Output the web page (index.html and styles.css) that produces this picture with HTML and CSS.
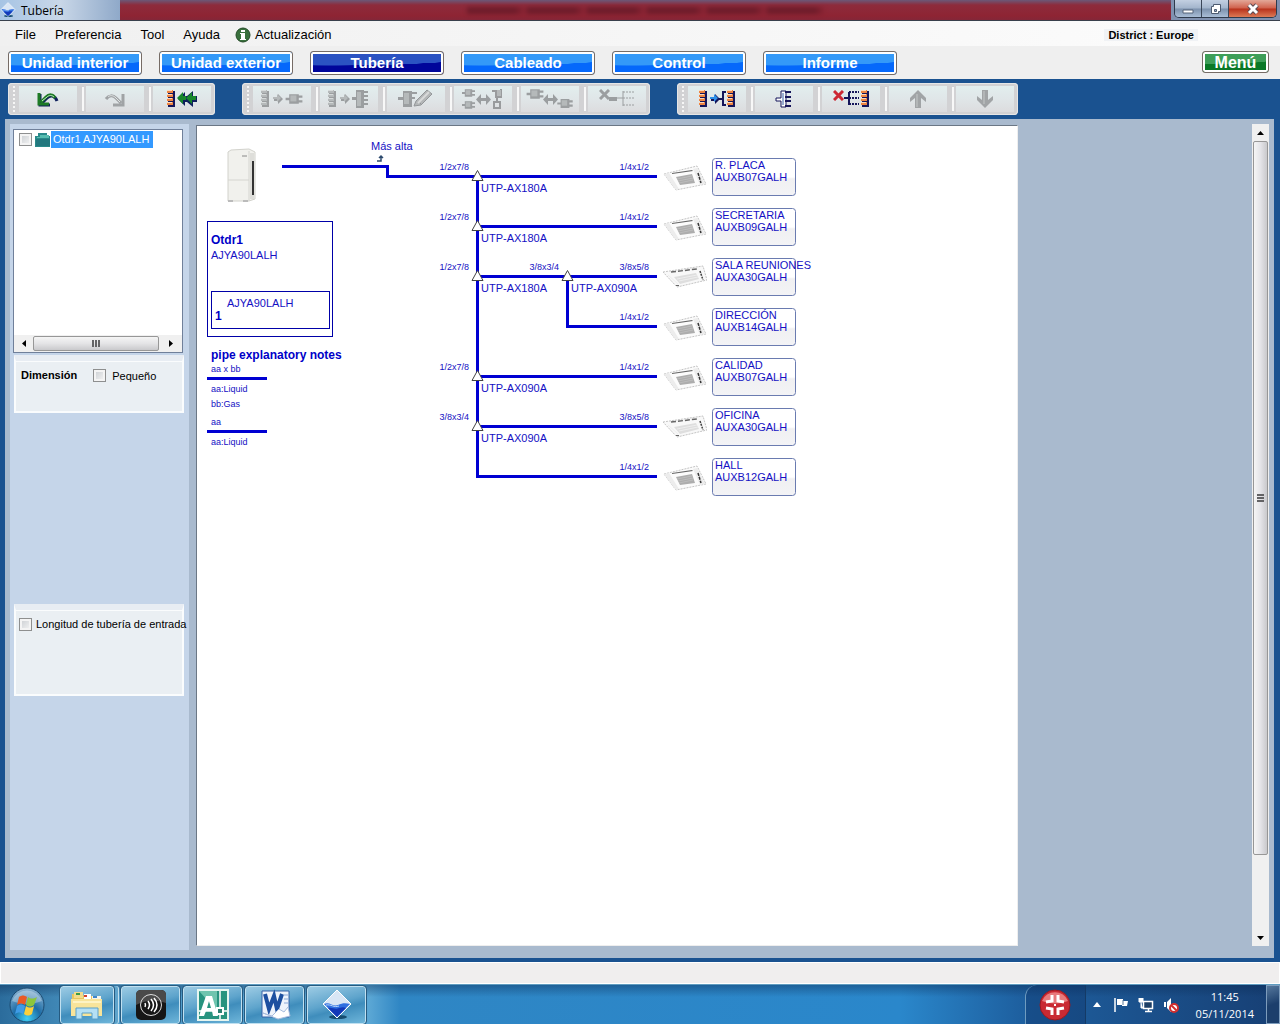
FILE: index.html
```html
<!DOCTYPE html>
<html lang="es">
<head>
  <meta charset="UTF-8">
  <meta name="viewport" content="width=device-width, initial-scale=1">
  <title>Tubería</title>
  <link rel="stylesheet" href="styles.css">
</head>
<body>
  <!-- shared icon shapes -->
  <svg class="sprite" aria-hidden="true">
    <symbol id="stack" viewBox="0 0 8 17">
      <path class="edge" d="M1 1h7v4H1zM1 5h7v4H1zM1 9h7v4H1zM1 13h7v4H1z"/>
      <path class="accent" d="M0 0h6v3H0zM0 4h6v3H0zM0 8h6v3H0zM0 12h6v3H0z"/>
      <path class="shine" d="M0 0h5v1H0zM0 4h5v1H0zM0 8h5v1H0zM0 12h5v1H0z"/>
    </symbol>
    <symbol id="arrow-r" viewBox="0 0 10 11">
      <path class="edge" d="M1 4h4V1l5 5-5 5V8H1z"/>
      <path class="arrow" d="M0 4h4V1l4 4-4 4V6H0z"/>
    </symbol>
    <symbol id="arrow-lr" viewBox="0 0 15 11">
      <path class="edge" d="M0 5.500 5 0v4h5V0l5 5.500-5 5.500V7H5v4z"/>
    </symbol>
    <symbol id="block" viewBox="0 0 14 10">
      <path class="edge" d="M0 4h3v2H0zM3 1h8v8H3zM11 2h3v2h-3zM11 6h3v2h-3z"/>
      <path class="accent" d="M4 2h5v5H4z"/>
    </symbol>
    <symbol id="cross" viewBox="0 0 11 11">
      <path class="cross" d="M1 1l9 9M10 1l-9 9"/>
    </symbol>
    <symbol id="cassette-b" viewBox="0 0 44 26">
      <path d="M1 9 34 1 43 19 13 25z" fill="#fbfbfb" stroke="#c4c4c4" stroke-dasharray="2 1"/>
      <path d="M1 9 6 8 16 24 13 25zM34 3l8 16-5 1-7-16z" fill="#ececec"/>
      <path d="m9 8 20-3 1 1-21 3z" fill="#666"/>
      <path d="m13 12 16-3 3 9-15 2z" fill="#adadad"/>
      <path d="m14 14 15-3M15 16l15-3M16 18l14-3" stroke="#bcbcbc"/>
      <path d="m35 8 3 10" stroke="#333" stroke-width="1.500" stroke-dasharray="3 1"/>
    </symbol>
    <symbol id="cassette-a" viewBox="0 0 44 26">
      <path d="M0 7 40 1 44 15 14 22z" fill="#f8f8f8" stroke="#c4c4c4" stroke-dasharray="2 1"/>
      <path d="m11 12 22-4 3 6-19 5z" fill="#dedede"/>
      <path d="m8 7 26-3" stroke="#666" stroke-width="1.500" stroke-dasharray="5 2"/>
      <path d="m14 14 20-4M16 16l19-4M5 10l10 9" stroke="#eee"/>
      <path d="m37 6 3 9" stroke="#444" stroke-width="1.500" stroke-dasharray="2 1"/>
      <path d="M13 20h3v1h-3z" fill="#666"/>
    </symbol>
    <symbol id="app-logo" viewBox="0 0 32 32">
      <ellipse cx="17" cy="28" rx="9" ry="2" fill="#154c70"/>
      <path d="M16 1 30 15 16 29 2 15z" fill="#d9e6f5" stroke="#fff"/>
      <path d="M3 15c5-3 9 3 14 1 4-2 8-2 12-1L16 28z" fill="#2f6fe0"/>
      <path d="M7 19c5-1 7 2 11 0 3-1 5-1 7 0l-9 9z" fill="#1238b8"/>
      <path d="M5 16c5-1 8 3 13 1" fill="none" stroke="#b8d4fa"/>
    </symbol>
  </svg>

  <div class="window">
    <header class="titlebar">
      <svg class="title-icon"><use href="#app-logo"/></svg>
      <h1>Tubería</h1>
      <div class="glass"><span class="ghost"></span></div>
      <div class="caption-buttons">
        <button aria-label="Minimizar"><svg width="12" height="12"><path d="M1 7h10v3H1z" fill="#fff" stroke="#56657a"/></svg></button>
        <button aria-label="Restaurar"><svg width="13" height="12"><path d="M4.500 1.500h7v7h-2v2h-7v-7h2z" fill="#fff" stroke="#4d5b70"/><path d="M5.500 6.500h2v2h-2z" fill="#9db0c8" stroke="#4d5b70"/></svg></button>
        <button class="close" aria-label="Cerrar"><svg width="14" height="12"><path d="m3 2 8 8m0-8-8 8" stroke="#5a4a52" stroke-width="5"/><path d="m3 2 8 8m0-8-8 8" stroke="#fff" stroke-width="3"/></svg></button>
      </div>
    </header>

    <nav class="menubar">
      <button>File</button>
      <button>Preferencia</button>
      <button>Tool</button>
      <button>Ayuda</button>
      <button class="update">
        <svg width="16" height="16"><circle cx="8" cy="8" r="7" fill="#38703c" stroke="#234a26"/><path d="M6 3h4v2H6zM5 6h5v6h1v1H5v-1h1V7H5z" fill="#fff"/></svg>
        Actualización
      </button>
      <span class="district">District : Europe</span>
    </nav>

    <nav class="tabs">
      <button class="tab">Unidad interior</button>
      <button class="tab">Unidad exterior</button>
      <button class="tab active">Tubería</button>
      <button class="tab">Cableado</button>
      <button class="tab">Control</button>
      <button class="tab">Informe</button>
      <button class="tab menu">Menú</button>
    </nav>

    <div class="toolbar">
      <div class="tools">
        <button aria-label="Deshacer"><svg width="22" height="18"><path d="M3 4v11h10M5 13l5-5c3-3 8-3 10 3" fill="none" stroke="#10205c" stroke-width="3"/><path d="M2 3v11h10M4 12l5-5c3-3 7-3 9 1" fill="none" stroke="#1d7a25" stroke-width="3"/><path d="M5 11l5-4c2-2 5-2 7 0" fill="none" stroke="#c4ecc4"/></svg></button>
        <button class="off" aria-label="Rehacer"><svg width="22" height="18"><path d="M19 4v11H9M17 13l-5-5c-3-3-7-3-10 1" fill="none" stroke="#a0a3a5" stroke-width="3"/><path d="m16 12-4-4C9 5 6 5 4 7" fill="none" stroke="#e0e4e4"/></svg></button>
        <button aria-label="Retirar todo"><svg width="30" height="18"><use href="#stack" width="8" height="17"/><path d="m11 9 7-7v4h2l6-5v5h4v6h-4v5l-6-5h-2v4z" fill="#10205c"/><path d="m10 8 6-6v4h3v4h-3v4zM19 8l6-6v4h4v4h-4v4z" fill="#17872b"/></svg></button>
      </div>

      <div class="tools">
        <button class="off" aria-label="Conectar unidad"><svg width="42" height="20"><use href="#stack" width="8" height="17" y="1"/><use href="#arrow-r" x="12" y="4" width="10" height="11"/><use href="#block" x="24" y="4" width="18" height="12"/></svg></button>
        <button class="off" aria-label="Conectar grupo"><svg width="42" height="20"><use href="#stack" width="8" height="17" y="1"/><use href="#arrow-r" x="12" y="4" width="10" height="11"/><path class="edge" d="M24 8h4V1h8v18h-8v-8h-4z"/><path class="accent" d="M29 3h4v14h-4z"/><path class="edge" d="M36 2h4v2h-4zM36 6h4v2h-4zM36 10h4v2h-4zM36 14h4v2h-4z"/></svg></button>
        <button class="off" aria-label="Editar"><svg width="36" height="20"><path class="edge" d="M0 8h5V2h9v16H5v-7H0z"/><path class="accent" d="M6 4h5v11H6z"/><path d="m16 17 2-5L29 1l5 4-11 11zM20 12l3 3" fill="#b4b7b8" stroke="#939698"/><path d="m20 14 11-11" stroke="#d8dada" stroke-width="2"/><path class="edge" d="M14 3h5v2h-5zM14 8h3v2h-3z"/></svg></button>
        <button class="off" aria-label="Intercambiar ramas"><svg width="42" height="22"><use href="#block" width="13" height="10"/><use href="#block" y="12" width="13" height="10"/><use href="#arrow-lr" x="14" y="6" width="15" height="11"/><path d="M30 3h4v6h5V1m-4 8v5M32 14h6v6h-6z" fill="none" stroke="#999b9d" stroke-width="2"/><path class="accent" d="M35 2h4v6h-4z"/></svg></button>
        <button class="off" aria-label="Cambiar unidad"><svg width="48" height="22"><use href="#block" width="18" height="12"/><use href="#arrow-lr" x="17" y="6" width="15" height="11"/><use href="#block" x="30" y="10" width="18" height="11"/></svg></button>
        <button class="off" aria-label="Eliminar rama"><svg width="36" height="20"><use href="#cross" width="11" height="11"/><path class="edge" d="M10 8h8v4h-8z"/><path class="wire" d="M18 9h6m0-7v15"/><path class="dash" d="M24 3h11M24 9h11M24 16h11"/></svg></button>
      </div>

      <div class="tools">
        <button aria-label="Conectar automáticamente"><svg width="36" height="18"><use href="#stack" width="8" height="17"/><use href="#arrow-r" x="11" y="3" width="10" height="11"/><path class="wire" d="M20 9h4m3-7h-3v13h3"/><use href="#stack" x="28" width="8" height="17"/></svg></button>
        <button aria-label="Colector"><svg width="18" height="18"><path d="M1 8h5V1h5v16H6v-6H1z" fill="#fff" stroke="#15155a"/><path class="wire" d="M10 2h6M10 7h6M10 11h6M10 16h6"/><path d="M7 3h2v12H7z" fill="#9aaed2"/></svg></button>
        <button aria-label="Eliminar conexiones"><svg width="36" height="18"><use href="#cross" width="11" height="11"/><path class="wire" d="M11 8h5m0-6v13"/><path class="dash" d="M16 2h10M16 8h10M16 14h10"/><use href="#stack" x="28" width="8" height="17"/></svg></button>
        <button class="off" aria-label="Subir"><svg width="18" height="18"><path d="m9 0 8 8v4l-5-4v10H6V8l-5 4V8z" fill="#a1a4a6"/><path d="M8 4v13" stroke="#c4c8c8"/></svg></button>
        <button class="off" aria-label="Bajar"><svg width="18" height="18"><path d="m9 18 8-8V6l-5 4V0H6v10L1 6v4z" fill="#a1a4a6"/><path d="M8 1v13" stroke="#c4c8c8"/></svg></button>
      </div>
    </div>

    <main class="workspace">
      <aside class="sidebar">
        <div class="tree">
          <div class="tree-item">
            <input type="checkbox" id="otdr1">
            <svg width="16" height="14"><path d="M0 3h3V0h9v3h3v11H0z" fill="#2a8a8a"/><path d="M2 4h3V2h9v3H2z" fill="#57bdb0"/><path d="M1 6h14v7H1z" fill="#23787e"/></svg>
            <label for="otdr1">Otdr1 AJYA90LALH</label>
          </div>
          <div class="scroll-h">
            <button aria-label="Izquierda"><svg width="4" height="7"><path d="M4 0v7L0 3.500z"/></svg></button>
            <div class="thumb"><i></i><i></i><i></i></div>
            <button aria-label="Derecha"><svg width="4" height="7"><path d="M0 0v7l4-3.500z"/></svg></button>
          </div>
        </div>
        <section class="panel">
          <strong>Dimensión</strong>
          <label><input type="checkbox"> Pequeño</label>
        </section>
        <section class="panel length">
          <label><input type="checkbox"> Longitud de tubería de entrada</label>
        </section>
      </aside>

      <div class="paper">
        <svg class="diagram" width="640" height="400" viewBox="0 0 640 400">
          <defs>
            <linearGradient id="card-fill" x1="0" y1="0" x2="0" y2="1">
              <stop offset="0.500" stop-color="#fff"/>
              <stop offset="0.550" stop-color="#f0f0f2"/>
              <stop offset="1" stop-color="#f3f3f6"/>
            </linearGradient>
          </defs>

          <!-- outdoor unit -->
          <path d="m31 26 3-2 18-1 6 3v47l-6 2H31z" fill="#f1f1ed" stroke="#d2d2cc"/>
          <path d="M52 25v50M31 54h21" stroke="#d5d5d0"/>
          <path d="M53 27h4v46h-4z" fill="#dededa"/>
          <path d="M56 35v34" stroke="#333" stroke-width="2"/>
          <path d="M45 30h5" stroke="#888"/>
          <path d="M31 75h5m10 0h5" stroke="#bbb" stroke-width="2"/>

          <!-- outdoor unit data and legend -->
          <g class="frame">
            <rect x="10.500" y="95.500" width="125" height="115"/>
            <rect x="14.500" y="165.500" width="118" height="37"/>
          </g>
          <text class="bold" x="14" y="118">Otdr1</text>
          <text x="14" y="133">AJYA90LALH</text>
          <text x="30" y="181">AJYA90LALH</text>
          <text class="bold" x="18" y="194">1</text>
          <text class="bold" x="14" y="233">pipe explanatory notes</text>
          <g class="small">
            <text x="14" y="246">aa x bb</text>
            <text x="14" y="266">aa:Liquid</text>
            <text x="14" y="281">bb:Gas</text>
            <text x="14" y="299">aa</text>
            <text x="14" y="319">aa:Liquid</text>
          </g>
          <path class="pipe" d="M10 252.500h60M10 305.500h60"/>

          <text x="174" y="24">Más alta</text>
          <path d="M180 35h4v-4m-2 1 2-2 2 2" fill="none" stroke="#2d4a6e" stroke-width="1.500"/>

          <!-- pipes -->
          <path class="pipe" d="M85 40.500h105.500v10H460M280.500 50.500v300H460M280.500 100.500H460M280.500 150.500H460M370.500 150.500v50H460M280.500 250.500H460M280.500 300.500H460"/>

          <g class="joints">
            <path d="m280.500 44.500 5.500 10h-11z"/>
            <path d="m280.500 94.500 5.500 10h-11z"/>
            <path d="m280.500 144.500 5.500 10h-11z"/>
            <path d="m370.500 144.500 5.500 10h-11z"/>
            <path d="m280.500 244.500 5.500 10h-11z"/>
            <path d="m280.500 294.500 5.500 10h-11z"/>
          </g>
          <text x="284" y="66">UTP-AX180A</text>
          <text x="284" y="116">UTP-AX180A</text>
          <text x="284" y="166">UTP-AX180A</text>
          <text x="374" y="166">UTP-AX090A</text>
          <text x="284" y="266">UTP-AX090A</text>
          <text x="284" y="316">UTP-AX090A</text>

          <g class="small size">
            <text x="272" y="44">1/2x7/8</text>
            <text x="272" y="94">1/2x7/8</text>
            <text x="272" y="144">1/2x7/8</text>
            <text x="362" y="144">3/8x3/4</text>
            <text x="272" y="244">1/2x7/8</text>
            <text x="272" y="294">3/8x3/4</text>
            <text x="452" y="44">1/4x1/2</text>
            <text x="452" y="94">1/4x1/2</text>
            <text x="452" y="144">3/8x5/8</text>
            <text x="452" y="194">1/4x1/2</text>
            <text x="452" y="244">1/4x1/2</text>
            <text x="452" y="294">3/8x5/8</text>
            <text x="452" y="344">1/4x1/2</text>
          </g>

          <!-- indoor units -->
          <g class="unit" transform="translate(466 32)">
            <use href="#cassette-b" y="7" width="44" height="26"/>
            <rect x="49.500" y="0.500" width="83" height="37" rx="3"/>
            <text x="52" y="11">R. PLACA</text><text x="52" y="23">AUXB07GALH</text>
          </g>
          <g class="unit" transform="translate(466 82)">
            <use href="#cassette-b" y="7" width="44" height="26"/>
            <rect x="49.500" y="0.500" width="83" height="37" rx="3"/>
            <text x="52" y="11">SECRETARIA</text><text x="52" y="23">AUXB09GALH</text>
          </g>
          <g class="unit" transform="translate(466 132)">
            <use href="#cassette-a" y="7" width="44" height="26"/>
            <rect x="49.500" y="0.500" width="83" height="37" rx="3"/>
            <text x="52" y="11">SALA REUNIONES</text><text x="52" y="23">AUXA30GALH</text>
          </g>
          <g class="unit" transform="translate(466 182)">
            <use href="#cassette-b" y="7" width="44" height="26"/>
            <rect x="49.500" y="0.500" width="83" height="37" rx="3"/>
            <text x="52" y="11">DIRECCIÓN</text><text x="52" y="23">AUXB14GALH</text>
          </g>
          <g class="unit" transform="translate(466 232)">
            <use href="#cassette-b" y="7" width="44" height="26"/>
            <rect x="49.500" y="0.500" width="83" height="37" rx="3"/>
            <text x="52" y="11">CALIDAD</text><text x="52" y="23">AUXB07GALH</text>
          </g>
          <g class="unit" transform="translate(466 282)">
            <use href="#cassette-a" y="7" width="44" height="26"/>
            <rect x="49.500" y="0.500" width="83" height="37" rx="3"/>
            <text x="52" y="11">OFICINA</text><text x="52" y="23">AUXA30GALH</text>
          </g>
          <g class="unit" transform="translate(466 332)">
            <use href="#cassette-b" y="7" width="44" height="26"/>
            <rect x="49.500" y="0.500" width="83" height="37" rx="3"/>
            <text x="52" y="11">HALL</text><text x="52" y="23">AUXB12GALH</text>
          </g>
        </svg>
      </div>

      <div class="scroll-v">
        <button aria-label="Arriba"><svg width="7" height="4"><path d="M0 4h7L3.500 0z"/></svg></button>
        <div class="thumb"><i></i><i></i><i></i></div>
        <button aria-label="Abajo"><svg width="7" height="4"><path d="M0 0h7L3.500 4z"/></svg></button>
      </div>
    </main>

    <div class="statusbar"></div>
  </div>

  <footer class="taskbar">
    <button class="start" aria-label="Inicio">
      <svg width="38" height="38" viewBox="0 0 38 38">
        <defs><radialGradient id="orb" cx="0.500" cy="0.900" r="0.900"><stop offset="0" stop-color="#3fd0f5"/><stop offset="0.450" stop-color="#1c6ca6"/><stop offset="1" stop-color="#8fb6d4"/></radialGradient></defs>
        <circle cx="19" cy="19" r="17" fill="url(#orb)" stroke="#1b4a70"/>
        <path d="M4 15a16 16 0 0 1 30 0c-10 4-20 4-30 0z" fill="#fff" opacity="0.300"/>
        <path d="M11 11c3-2 5-2 8 0l-2 8c-3-2-5-2-8 0z" fill="#ea5a24"/>
        <path d="M20 11c3 2 5 2 9 0l-3 8c-3 2-5 2-8 0z" fill="#8cc63c"/>
        <path d="M9 20c3-2 5-2 8 0l-2 8c-3-2-5-2-8 0z" fill="#3f9be6"/>
        <path d="M18 20c3 2 5 2 8 0l-2 8c-3 2-5 2-8 0z" fill="#fbd03c"/>
      </svg>
    </button>
    <button class="task stacked" aria-label="Explorador"><svg width="34" height="32"><path d="M2 5h10l2 2h17v20H2z" fill="#e8c65f"/><path d="M4 3h9v6H4z" fill="#f2dc8c"/><path d="M6 4h4v2H6z" fill="#3c9a46"/><path d="M14 5h7v5h-7z" fill="#fff"/><path d="M14 6h3v2h-3z" fill="#d5402c"/><path d="M22 7h9v5h-9z" fill="#f4f4ea"/><path d="M23 7h4v2h-4z" fill="#3f86cc"/><path d="M1 10h31v17H1z" fill="#f8e49a"/><path d="M3 12h28v2H3z" fill="#fdf3c4"/><path d="M6 30V19h22v11h-6v-6H12v6z" fill="#b5e0f4" stroke="#5ba0c8"/></svg></button>
    <button class="task" aria-label="Audio"><svg width="32" height="32"><rect x="1" y="1" width="30" height="30" rx="5" fill="#161616"/><path d="M1 6q0-5 5-5h20q5 0 5 5v8q-15-6-30 2z" fill="#4a4a4a"/><circle cx="16" cy="16" r="10.500" fill="none" stroke="#ddd"/><path d="M10 14q1 2 0 4M13 12q3 4 0 8M16 10q5 6 0 12M19 9q6 7 0 14" fill="none" stroke="#fff" stroke-width="1.500"/></svg></button>
    <button class="task" aria-label="CAD"><svg width="34" height="34"><path d="M2 2h30v30H2z" fill="#28937f" stroke="#e6f5f0" stroke-width="2"/><path d="M3 3h18v20z" fill="#6fc4ae"/><path d="m3 28 7-20h6l6 20h-5l-1-5h-6l-2 5zm8-8h4l-2-7z" fill="#fff"/><path d="M24 3v28M3 23h28" stroke="#fff" stroke-width="1.500"/><path d="M21 20h6v6h-6z" fill="#2b8072" stroke="#fff" stroke-width="2"/></svg></button>
    <button class="task" aria-label="Word"><svg width="32" height="32"><path d="M3 2h27v26H3z" fill="#eef3fb" stroke="#3562a8"/><path d="M25 6h4M25 10h4M25 14h4" stroke="#8aa8d8"/><path d="m6 5 4 15 5-13 3 13 5-15" fill="none" stroke="#1d4fa0" stroke-width="4"/><path d="m4 24 9 3 7-7 5 3 4-5 2 9-12 3z" fill="#fff" stroke="#a8bddd"/></svg></button>
    <button class="task" aria-label="Tubería"><svg width="32" height="32"><use href="#app-logo"/></svg></button>

    <div class="tray-app"><svg width="32" height="32"><circle cx="16" cy="16" r="15" fill="#c92a33" stroke="#9a1a22"/><path d="M3 12a14 14 0 0 1 26 0q-13 5-26 0z" fill="#e87a7c"/><path d="M13 6v6l-6 1M19 6v6l6 1M13 26v-6l-6-1M19 26v-6l6-1" fill="none" stroke="#fff" stroke-width="3"/><path d="M15 15h2v2h-2z" fill="#fff"/></svg></div>
    <div class="tray">
      <svg width="8" height="5"><path d="m4 0 4 5H0z" fill="#fff"/></svg>
      <svg width="16" height="16"><path d="M2 1v14" stroke="#fff" stroke-width="1.500"/><path d="M4 2h6v2h5l-1 5H9V8H4z" fill="#fff"/><path d="M10 3v5" stroke="#5a7a9c"/></svg>
      <svg width="16" height="16"><path d="M5.500 4.500h9v7h-9zM7 14.500h7M10.500 11v3" fill="#1c3f66" stroke="#fff" stroke-width="1.500"/><path d="M1 1v4h4V1M3 5v6h2" fill="#fff" stroke="#fff"/></svg>
      <svg width="16" height="16"><path d="M1 5h2v5H1zM4 5l4-4v14l-4-4z" fill="#fff"/><circle cx="11" cy="11" r="4" fill="#fff" stroke="#d22f2f" stroke-width="2"/><path d="m8 8 6 6" stroke="#d22f2f" stroke-width="2"/></svg>
      <time class="clock">11:45<br>05/11/2014</time>
    </div>
    <button class="show-desktop" aria-label="Mostrar escritorio"></button>
  </footer>
</body>
</html>
```

FILE: styles.css
```css
* { margin: 0; padding: 0; box-sizing: border-box; }
body {
  min-height: 100vh;
  display: flex;
  flex-direction: column;
  font-family: "Liberation Sans", Arial, sans-serif;
  font-size: 11px;
  color: #000;
  background: #1a5290;
}
button {
  font: inherit;
  color: inherit;
  border: none;
  background: none;
}
svg { display: block; flex: none; }
.sprite { position: absolute; width: 0; height: 0; }
.window {
  flex: 1;
  display: flex;
  flex-direction: column;
}

/* title bar */
.titlebar {
  display: flex;
  height: 21px;
  align-items: center;
  background: linear-gradient(90deg, #a6c4e4, #c9d7e8 60px, #8fa9c9 120px, #7f8fae);
  border-bottom: 1px solid #39404c;
}
.title-icon { width: 16px; height: 16px; }
h1 {
  width: 104px;
  padding-left: 5px;
  font: 12px "Open Sans", sans-serif;
}
.glass {
  flex: 1;
  height: 100%;
  display: flex;
  justify-content: center;
  align-items: center;
  background: linear-gradient(#6b5878, #8d2b3c 5px, #8e2433 16px, #842638);
}
.ghost {
  width: 34%;
  height: 7px;
  background: repeating-linear-gradient(90deg, #5a1522 0 48px, #84202f 56px 60px);
  opacity: 0.6;
  filter: blur(2px);
}
.caption-buttons {
  align-self: flex-start;
  display: flex;
  margin: 0 3px;
  border: 1px solid #2e3a4c;
  border-top: none;
  border-radius: 0 0 5px 5px;
  overflow: hidden;
}
.caption-buttons button {
  display: grid;
  place-items: center;
  width: 27px;
  height: 17px;
  border-right: 1px solid #3a4658;
  background: linear-gradient(#c3d0e2, #a3b5cc 8px, #7c91ad 9px, #a9bdd6);
}
.caption-buttons .close {
  width: 47px;
  border: none;
  background: linear-gradient(#e3a898, #d0614c 8px, #b8321c 9px, #dd7a55);
}

/* menu */
.menubar {
  display: flex;
  align-items: center;
  gap: 19px;
  height: 25px;
  padding: 2px 82px 0 15px;
  background: linear-gradient(90deg, #f0f0f0, #fcfcfc);
  font-size: 13px;
}
.update {
  display: flex;
  align-items: center;
  gap: 4px;
  margin-left: -4px;
}
.district {
  margin-left: auto;
  padding: 0 4px;
  background: #f0f2f5;
  font-size: 11px;
  font-weight: bold;
}

/* section tabs */
.tabs {
  display: flex;
  gap: 17px;
  height: 33px;
  padding: 5px 11px 4px 8px;
  background: #efefef;
}
.tab {
  --light: #3499f8;
  --deep: #0568fb;
  width: 134px;
  height: 24px;
  border: 1px solid #766c66;
  border-radius: 3px;
  box-shadow: inset 0 0 0 2px #fff;
  background: radial-gradient(130% 62% at 15% 0, var(--light) 98%, var(--deep));
  color: #fff;
  font-size: 15px;
  font-weight: bold;
  line-height: 22px;
}
.tab.active { --light: #2b52c2; --deep: #00059a; }
.tab.menu {
  --light: #3e9e58;
  --deep: #0a7826;
  width: 67px;
  height: 22px;
  margin-left: auto;
  font-size: 16px;
}

/* toolbar */
.toolbar {
  display: flex;
  gap: 27px;
  padding: 4px 8px;
  background: #1a5290;
}
.tools {
  display: flex;
  gap: 9px;
  height: 32px;
  padding: 3px 4px 3px 3px;
  border-radius: 4px;
  background: #d2d2d4;
  box-shadow: inset 0 0 0 1px #e6e6e6;
}
/* grip */
.tools::before {
  content: "";
  width: 4px;
  margin-right: -5px;
  margin-left: -2px;
  border-right: 2px dotted #f6f6f6;
}
.tools button {
  display: grid;
  place-items: center;
  position: relative;
  width: 58px;
  background: linear-gradient(#e2eeee, #e0e6e8 50%, #dcdcde);
}
.tools button + button::before {
  content: "";
  position: absolute;
  left: -4px;
  top: 1px;
  bottom: 1px;
  width: 2px;
  background: #f8f8f8;
}

/* icon inks, grey when the tool is off */
.off { --ink: #9b9ea0; --soft: #b5b9ba; --light: #d6dada; }
.edge { fill: var(--ink, #15155a); }
.accent { fill: var(--soft, #ee8442); }
.shine { fill: var(--light, #fbd9bd); }
.arrow { fill: var(--soft, #2f8fe8); }
.cross { fill: none; stroke: var(--ink, #cc2733); stroke-width: 3; }
.wire, .dash { fill: none; stroke: var(--ink, #15155a); stroke-width: 2; }
.dash { stroke-dasharray: 2 1; }
.off .wire, .off .dash { stroke-width: 1; }

/* workspace */
.workspace {
  flex: 1;
  display: flex;
  margin: 0 6px 4px 5px;
  padding: 5px 5px 8px;
  background: #a9bace;
}
.sidebar {
  display: grid;
  grid-template-columns: minmax(0, 1fr);
  grid-template-rows: auto auto 3fr auto 4fr;
  width: 179px;
  margin-right: 7px;
  padding: 5px 6px 0 3px;
  background: #c5d5e9;
}
.tree {
  display: flex;
  flex-direction: column;
  justify-content: space-between;
  height: 224px;
  border: 1px solid #70809a;
  background: #fff;
}
.tree-item {
  display: flex;
  align-items: center;
  padding: 1px 5px;
  gap: 2px;
}
.tree-item svg { margin: 0 -2px 0 1px; }
.tree-item label {
  padding: 0 4px 0 2px;
  background: #3399ff;
  color: #fff;
  line-height: 17px;
}
input[type="checkbox"] {
  appearance: none;
  flex: none;
  width: 13px;
  height: 13px;
  border: 1px solid #8e8f8f;
  background: linear-gradient(135deg, #c8ccd0, #f6f6f6);
  box-shadow: inset 0 0 0 2px #f4f4f4;
}
.scroll-h {
  display: flex;
  height: 17px;
  background: #f0f0f0;
}
.scroll-h button, .scroll-v button {
  display: grid;
  place-items: center;
  width: 19px;
  height: 17px;
}
.thumb {
  flex: 1;
  display: flex;
  justify-content: center;
  align-items: center;
  gap: 1px;
  margin: 1px 0;
  border: 1px solid #979797;
  border-radius: 2px;
  background: linear-gradient(#f5f5f5, #e4e4e6 50%, #c9c9cc);
}
.thumb i { width: 2px; height: 7px; background: #636365; }
.scroll-h button:last-child { width: 23px; }
.panel {
  display: flex;
  gap: 16px;
  align-items: flex-start;
  height: 58px;
  margin: 2px -1px 0 1px;
  padding: 8px 0 0 5px;
  border: 2px solid #fafcfd;
  border-top: 6px solid #e8edf3;
  background: #eaeff3;
  box-shadow: inset 0 1px #fafcfd;
}
.panel strong { line-height: 13px; }
.panel label {
  display: flex;
  align-items: center;
  gap: 6px;
  white-space: nowrap;
}
.length {
  grid-row: 4;
  height: 92px;
  margin-top: 0;
  padding-left: 3px;
}
.length label { gap: 4px; }
.paper {
  flex: 7;
  margin: 1px 0 4px;
  border: 1px solid #6b7785;
  border-right-color: #eee;
  border-bottom-color: #eee;
  background: #fff;
}
.workspace::after { content: ""; flex: 2; order: 1; }
.scroll-v {
  order: 2;
  display: flex;
  flex-direction: column;
  width: 17px;
  margin-bottom: 4px;
  background: #f0f0f0;
}
.scroll-v button { width: 17px; }
.scroll-v .thumb {
  flex: 0 1 714px;
  flex-direction: column;
  margin: 0 1px;
  background: linear-gradient(90deg, #f5f5f5, #e4e4e8 50%, #c9c9cc);
}
.scroll-v .thumb i { width: 7px; height: 2px; }
.scroll-v button:last-child { margin-top: auto; }

/* piping diagram */
.diagram { max-width: 100%; font-size: 11px; }
.diagram text { fill: #1410c4; }
.diagram .bold { font-size: 12px; font-weight: bold; fill: #0000c8; }
.diagram .small { font-size: 9px; }
.size { text-anchor: end; }
.pipe { fill: none; stroke: #0000d2; stroke-width: 3; }
.frame { fill: none; stroke: #0000a8; }
.joints { fill: #fff; stroke: #444; }
.unit rect { fill: url(#card-fill); stroke: #6a7bb0; }

.statusbar {
  height: 22px;
  border: 1px solid #fff;
  background: #f0eeee;
}

/* taskbar */
.taskbar {
  display: flex;
  height: 40px;
  border-top: 1px solid #5f9cc0;
  background:
    linear-gradient(rgba(10, 40, 80, 0.4), transparent 12px),
    linear-gradient(90deg, #2b6c9c, #4e9ac8 100px, #5aa6d4 370px, #2f86c4 400px, #2a87cb 900px, #1e60a0 1020px, #173f74);
}
.start { width: 54px; padding: 0 0 0 8px; }
.task {
  display: grid;
  place-items: center;
  width: 59px;
  margin: 1px 3px 0 0;
  border: 1px solid #c0e0f0;
  border-radius: 3px;
  outline: 1px solid #255a80;
  background: linear-gradient(165deg, #9ccbe4, #5ea4cc 45%, #3f8dbc 60%, #6fb6da);
}
.start + .task { margin-left: 6px; }
.task.stacked { width: 54px; margin-right: 7px; box-shadow: 4px 0 #5ea4cc, 5px 0 #c0e0f0; }
.tray-app {
  display: grid;
  place-items: center;
  width: 61px;
  margin-left: auto;
  border-left: 1px solid #6f9cc0;
  border-right: 1px solid #143a66;
  border-radius: 12px 0 0 0;
  background: rgba(10, 40, 90, 0.3);
}
.tray {
  display: flex;
  align-items: center;
  gap: 9px;
  padding: 0 12px 0 7px;
  color: #fff;
}
.tray svg:first-child { margin-right: 3px; }
.clock {
  margin-left: 8px;
  font: 11px/17px "Open Sans", sans-serif;
  text-align: center;
}
.show-desktop {
  width: 14px;
  border: 1px solid #7d9cbc;
  background: linear-gradient(160deg, #55779c, #1c3f6c 50%);
}
```
